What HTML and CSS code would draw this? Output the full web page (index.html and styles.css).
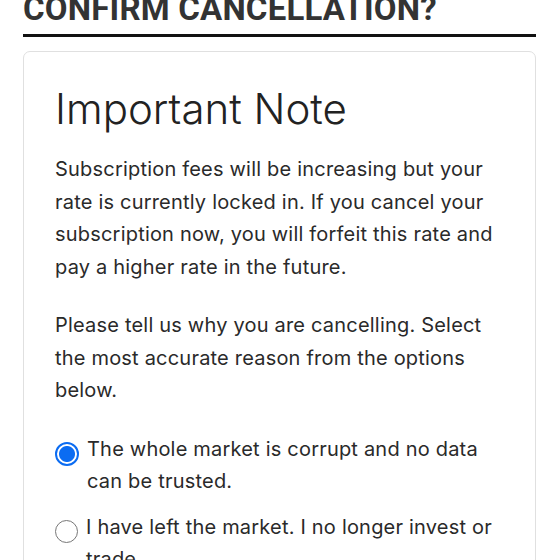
FILE: index.html
```html
<!DOCTYPE html>
<html>
<head>
<meta charset="utf-8">
<link rel="stylesheet" href="styles.css">
</head>
<body>
<div class="page">
  <h1 class="title">CONFIRM CANCELLATION?</h1>
  <div class="card">
    <h2 class="card-title">Important Note</h2>
    <p class="text">Subscription fees will be increasing but your rate is currently locked in. If you cancel your subscription now, you will forfeit this rate and pay a higher rate in the future.</p>
    <p class="text">Please tell us why you are cancelling. Select the most accurate reason from the options below.</p>
    <label class="option">
      <span class="radio checked"></span>
      <span class="option-text">The whole market is corrupt and no data can be trusted.</span>
    </label>
    <label class="option">
      <span class="radio"></span>
      <span class="option-text">I have left the market. I no longer invest or trade.</span>
    </label>
  </div>
</div>
</body>
</html>
```
FILE: styles.css
```css
html, body {
  margin: 0;
  padding: 0;
  background: #fff;
}
.page {
  padding: 0 24px 0 23px;
  overflow: hidden;
  height: 560px;
}
.title {
  font-family: Roboto, "Liberation Sans", sans-serif;
  font-weight: 700;
  font-size: 33px;
  line-height: 40px;
  color: #333;
  margin: -11px 0 0 0;
  padding-bottom: 5px;
  border-bottom: 3px solid #111;
  letter-spacing: 0.2px;
}
.card {
  margin-top: 14px;
  border: 1.5px solid #e0e0e0;
  border-radius: 7px;
  padding: 31px 30px 0 31px;
}
.card-title {
  font-family: Inter, "Noto Sans", sans-serif;
  font-weight: 300;
  font-size: 42px;
  line-height: 52px;
  color: #222;
  margin: 0 0 18px 0;
}
.text {
  font-family: Inter, "Noto Sans", sans-serif;
  font-size: 20px;
  line-height: 32.5px;
  letter-spacing: 0.2px;
  color: #2a2a2a;
  margin: 0 0 26px 0;
}
.option {
  display: flex;
  align-items: flex-start;
  gap: 8px;
  font-family: Inter, "Noto Sans", sans-serif;
  font-size: 20px;
  line-height: 32.5px;
  letter-spacing: 0.2px;
  color: #2a2a2a;
  margin-bottom: 13px;
}
.radio {
  flex: none;
  width: 21px;
  height: 21px;
  border: 1.5px solid #777;
  border-radius: 50%;
  margin-top: 9px;
  box-sizing: content-box;
  background: #fff;
}
.radio.checked {
  border: 2px solid #0b6cf2;
  width: 20px;
  height: 20px;
  background: radial-gradient(circle, #0b6cf2 0 7.5px, #fff 8.5px);
}
```
